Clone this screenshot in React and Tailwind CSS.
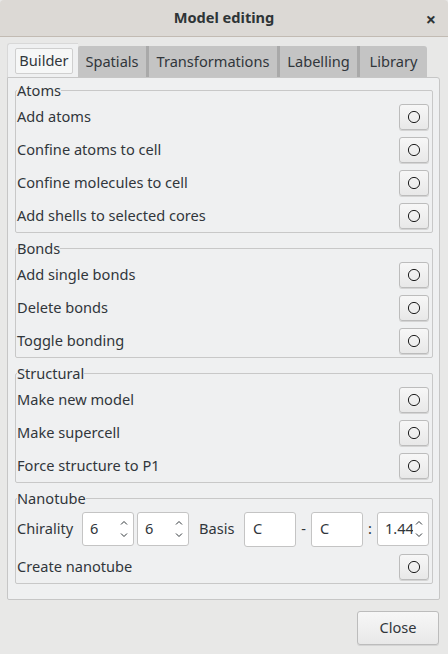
import React from 'react'

const font = { fontFamily: '"Noto Sans", "DejaVu Sans", sans-serif' }

function RingButton() {
  return (
    <button className="w-[30px] h-[26px] flex items-center justify-center rounded-[3px] border border-[#bcbcbc] bg-gradient-to-b from-[#f7f7f7] to-[#e8e8e8] shadow-[0_1px_0_#d4d4d4]">
      <svg width="14" height="14" viewBox="0 0 14 14">
        <circle cx="7" cy="7" r="5.6" fill="none" stroke="#1e1e1e" strokeWidth="1" />
      </svg>
    </button>
  )
}

function Group({ title, children }) {
  return (
    <fieldset className="min-w-0 border border-[#c8c8c8] rounded-[2px] pr-[3px]">
      <legend className="ml-[1px] text-[14.6px] leading-[20px] text-[#31363b]">{title}</legend>
      {children}
    </fieldset>
  )
}

function Row({ label }) {
  return (
    <div className="h-[33px] flex items-center justify-between pl-[1px]">
      <span className="text-[14.6px] text-[#31363b]">{label}</span>
      <RingButton />
    </div>
  )
}

function Spin({ value, w = 'w-[52px]' }) {
  return (
    <div className={`${w} h-[34px] shrink-0 flex items-center bg-white border border-[#c4c4c4] rounded-[3px] overflow-hidden`}>
      <span className="flex-1 pl-[7px] text-[14.6px] text-[#31363b] whitespace-nowrap overflow-hidden">{value}</span>
      <div className="w-[12px] flex flex-col items-center justify-center gap-[8px] mr-[3px]">
        <svg width="8" height="5" viewBox="0 0 8 5"><path d="M1 4.5 L4 1.5 L7 4.5" fill="none" stroke="#31363b" strokeWidth="1" /></svg>
        <svg width="8" height="5" viewBox="0 0 8 5"><path d="M1 0.5 L4 3.5 L7 0.5" fill="none" stroke="#31363b" strokeWidth="1" /></svg>
      </div>
    </div>
  )
}

function TextBox({ value }) {
  return (
    <div className="w-[52px] h-[35px] shrink-0 flex items-center bg-white border border-[#c4c4c4] rounded-[3px] pl-[8px] text-[14.6px] text-[#31363b]">
      {value}
    </div>
  )
}

const tabs = [
  { label: 'Spatials', w: 'w-[68px]' },
  { label: 'Transformations', w: 'w-[128px]' },
  { label: 'Labelling', w: 'w-[77px]' },
  { label: 'Library', w: 'w-[67px]' },
]

export default function App() {
  return (
    <div style={font} className="w-[448px] h-[654px] bg-[#e8e8e7] flex flex-col text-[#31363b]">
      <div className="relative h-[37px] shrink-0 flex items-center justify-center bg-[#dcd9d5] border-b border-[#c2bbb3] rounded-t-[4px]">
        <span className="text-[14.6px] font-bold text-[#2e3436]">Model editing</span>
        <span className="absolute right-[12px] top-[6px] text-[18px] font-bold text-[#2e3436]">×</span>
      </div>

      <div className="pt-[6px] pl-[7px] pr-[8px]">
        <div className="flex h-[34px]">
          <div className="w-[71px] bg-[#eff0f1] border-t border-l border-[#d8d8d8] rounded-tl-[3px] pt-[4px] pl-[7px]">
            <div className="w-[58px] h-[26px] flex items-center justify-center border border-[#cfcfcf] bg-[#f6f7f7] rounded-[2px] text-[14.6px]">
              Builder
            </div>
          </div>
          <div className="flex mt-[3px] h-[31px]">
            {tabs.map((t, i) => (
              <div key={t.label} className="flex">
                {i > 0 && <div className="w-[3px] bg-[#a9a9a9]" />}
                <div className={`${t.w} bg-[#c4c4c4] flex items-center justify-center text-[14.6px] whitespace-nowrap ${i === 0 ? 'rounded-tl-[2px]' : ''} ${i === 3 ? 'rounded-tr-[3px]' : ''}`}>
                  {t.label}
                </div>
              </div>
            ))}
          </div>
        </div>

        <div className="h-[523px] bg-[#eff0f1] border border-[#c6c6c6] rounded-b-[2px] rounded-tr-[3px] pt-[2px] pl-[7px] pr-[6px] flex flex-col gap-[5px]">
          <Group title="Atoms">
            <Row label="Add atoms" />
            <Row label="Confine atoms to cell" />
            <Row label="Confine molecules to cell" />
            <Row label="Add shells to selected cores" />
          </Group>
          <Group title="Bonds">
            <Row label="Add single bonds" />
            <Row label="Delete bonds" />
            <Row label="Toggle bonding" />
          </Group>
          <Group title="Structural">
            <Row label="Make new model" />
            <Row label="Make supercell" />
            <Row label="Force structure to P1" />
          </Group>
          <Group title="Nanotube">
            <div className="h-[42px] flex items-center pl-[1px]">
              <span className="text-[14.6px] w-[65px] shrink-0">Chirality</span>
              <Spin value="6" w="w-[52px]" />
              <div className="w-[3px] shrink-0" />
              <Spin value="6" w="w-[52px]" />
              <span className="text-[14.6px] ml-[10px] w-[45px] shrink-0">Basis</span>
              <TextBox value="C" />
              <span className="text-[14.6px] w-[15px] shrink-0 text-center">-</span>
              <TextBox value="C" />
              <span className="text-[14.6px] w-[14px] shrink-0 text-center">:</span>
              <Spin value="1.44" w="w-[52px]" />
            </div>
            <Row label="Create nanotube" />
          </Group>
        </div>
      </div>

      <div className="flex justify-end pr-[9px] pt-[11px]">
        <button className="w-[82px] h-[34px] rounded-[3px] border border-[#bcbcbc] bg-gradient-to-b from-[#f7f7f7] to-[#e8e8e8] shadow-[0_1px_0_#d4d4d4] text-[14.6px] text-[#31363b]">
          Close
        </button>
      </div>
    </div>
  )
}
